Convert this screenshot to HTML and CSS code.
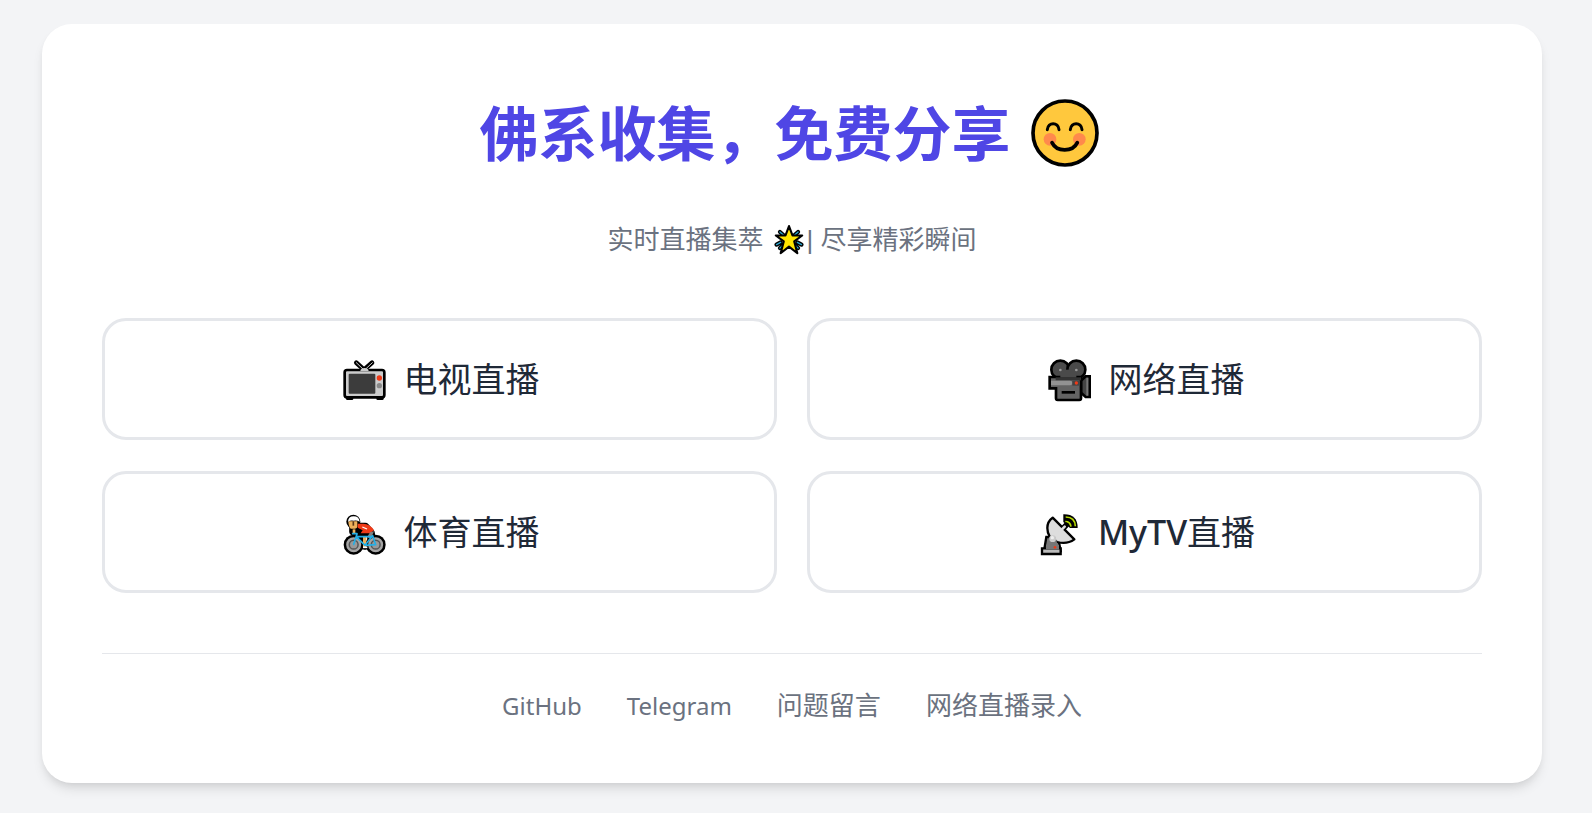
FILE: index.html
```html
<!DOCTYPE html>
<html lang="zh-CN">
<head>
  <meta charset="UTF-8" />
  <meta name="viewport" content="width=device-width, initial-scale=1.0"/>
  <title>佛系收集，免费分享</title>
  <link rel="stylesheet" href="styles.css">
</head>
<body>

  <main class="card">
    <h1 class="title">
      <span>佛系收集，免费分享</span>
      <svg class="title-icon" viewBox="28 27 204 204" aria-hidden="true">
        <circle cx="130" cy="129" r="96" fill="#ffc83d" stroke="#000" stroke-width="11"/>
        <circle cx="85" cy="148" r="19" fill="#ff8a4c"/>
        <circle cx="173" cy="148" r="19" fill="#ff8a4c"/>
        <path d="M77 119c2-24 33-24 35 0M146 119c2-24 33-24 35 0" fill="none" stroke="#000" stroke-width="9" stroke-linecap="round"/>
        <path d="M91 158c14 29 62 29 76 0" fill="none" stroke="#000" stroke-width="11" stroke-linecap="round"/>
      </svg>
    </h1>

    <p class="subtitle">
      <span>实时直播集萃</span>
      <svg class="subtitle-icon" viewBox="24 27 92 92" aria-hidden="true">
        <path d="M44 50l52 46M96 50L44 96M34 86l12-6M94 80l12 6" stroke="#000" stroke-width="12" stroke-linecap="round"/>
        <path d="M44 50l52 46M96 50L44 96M34 86l12-6M94 80l12 6" stroke="#29a6d0" stroke-width="4" stroke-linecap="round"/>
        <path d="M70 33l10 27h28L85 77l9 34-24-19-24 19 9-34-23-17h28z" fill="#ffe500" stroke="#000" stroke-width="6" stroke-linejoin="round"/>
      </svg>
      <span>| 尽享精彩瞬间</span>
    </p>

    <!-- 直播入口 -->
    <nav class="links">
      <a class="link" href="#tv">
        <svg class="link-icon" viewBox="28 16 144 144" aria-hidden="true">
          <path d="M77 39l23 21 24-21" fill="none" stroke="#000" stroke-width="14" stroke-linecap="round"/>
          <path d="M50 139h14v8H50zM141 139h14v8h-14z" fill="#000" stroke="#000" stroke-width="8" stroke-linejoin="round"/>
          <rect x="42" y="61" width="119" height="82" rx="7" fill="#ccc" stroke="#000" stroke-width="8"/>
          <path d="M77 39l24 23 24-23" fill="none" stroke="#ccc" stroke-width="3" stroke-linecap="round"/>
          <path d="M89 64c0-12 25-12 25 0z" fill="#ccc"/>
          <rect x="54" y="72" width="80" height="60" rx="3" fill="#3c3c3c"/>
          <circle cx="146" cy="85" r="8" fill="#f03a17"/>
          <circle cx="146" cy="108" r="8" fill="#888"/>
        </svg>
        <span>电视直播</span>
      </a>
      <a class="link" href="#network">
        <svg class="link-icon" viewBox="28 16 144 144" aria-hidden="true">
          <path d="M136 93l14-13h12v62h-12l-14-13z" fill="#444" stroke="#000" stroke-width="8"/>
          <circle cx="74" cy="60" r="27" fill="#4a4a4a" stroke="#000" stroke-width="8"/>
          <circle cx="122" cy="60" r="27" fill="#4a4a4a" stroke="#000" stroke-width="8"/>
          <path d="M42 82h94v64q0 5-5 5H66q-5 0-5-5v-30H42z" fill="#636363" stroke="#000" stroke-width="8"/>
          <path d="M74 60h48v24H74z" fill="#4a4a4a"/>
          <path d="M60 83h76v9H60z" fill="#333"/>
          <path d="M46 93h57q7 0 7 7t-7 7H46z" fill="#929292"/>
          <path d="M110 93h23v15h-23z" fill="#444"/>
          <path d="M152 84h6v54h-6z" fill="#777"/>
          <circle cx="74" cy="61" r="4" fill="#999"/>
          <circle cx="122" cy="61" r="4" fill="#999"/>
          <circle cx="122" cy="100" r="5" fill="#f03a17"/>
          <path d="M78 124h40v8H78z" fill="#000"/>
        </svg>
        <span>网络直播</span>
      </a>
      <a class="link" href="#sports">
        <svg class="link-icon" viewBox="28 9 144 144" aria-hidden="true">
          <path d="M68 56v24M78 66h26l16 18 4 28M104 84l-28 4 26 34" fill="none" stroke="#000" stroke-width="25" stroke-linejoin="round" stroke-linecap="round"/>
          <circle cx="68" cy="50" r="21"/>
          <!-- 车轮 -->
          <circle cx="69" cy="119" r="30"/>
          <circle cx="135" cy="119" r="30"/>
          <circle cx="69" cy="119" r="19" fill="#555" stroke="#a5a5a5" stroke-width="7"/>
          <circle cx="135" cy="119" r="19" fill="#555" stroke="#a5a5a5" stroke-width="7"/>
          <circle cx="69" cy="119" r="11" fill="#999"/>
          <circle cx="135" cy="119" r="11" fill="#999"/>
          <path d="M53 49h27v15q0 7-7 7H60q-6-5-7-22z" fill="#eeb15b"/>
          <path d="M52 50q1-16 17-16t18 16q-9-5-18-3-9-2-17 3z" fill="#fff"/>
          <path d="M68 49v13" stroke="#5c3818" stroke-width="5"/>
          <path d="M81 56h17q20 0 32 20l-12 9H90l6-9-15-8z" fill="#f03a17"/>
          <path d="M95 66l14 6" stroke="#fff" stroke-width="4"/>
          <path d="M118 82l12-3-10 23-10-6z" fill="#808080"/>
          <path d="M70 73v12" stroke="#eeb15b" stroke-width="8"/>
          <path d="M102 94v32" stroke="#eeb15b" stroke-width="10"/>
          <path d="M66 86h13M79 87l-10 31M77 95l26 26 22-28M79 95h45M126 92l9 27-31 2" fill="none" stroke="#24aee5" stroke-width="5" stroke-linejoin="round" stroke-linecap="round"/>
          <path d="M97 127h13" stroke="#fff" stroke-width="5"/>
        </svg>
        <span>体育直播</span>
      </a>
      <a class="link" href="#mytv">
        <svg class="link-icon" viewBox="24 9 144 144" aria-hidden="true">
          <path d="M112 28q43-1 43 41h-23l-20-18z" fill="#000"/>
          <path d="M119 36q28 0 29 28M118 50q15 0 17 15" fill="none" stroke="#b6d900" stroke-width="5"/>
          <path d="M105 77l15-16" stroke="#000" stroke-width="17" stroke-linecap="round"/>
          <path d="M61 96l-7 42h50l-8-42z" fill="#777" stroke="#000" stroke-width="7"/>
          <path d="M80 38l65 65q-22 16-51 8-30-10-30-42 0-20 16-31z" fill="#ddd" stroke="#000" stroke-width="7" stroke-linejoin="round"/>
          <path d="M102 79l14-14" stroke="#ddd" stroke-width="8" stroke-linecap="round"/>
          <path d="M69 97h20l9 37H61z" fill="#777"/>
          <circle cx="80" cy="101" r="10" fill="#ccc"/>
          <circle cx="79" cy="98" r="5" fill="#eee"/>
          <path d="M48 130h56v17H48z" fill="#bbb" stroke="#000" stroke-width="7"/>
          <path d="M60 119h39v14H60z" fill="#777"/>
          <circle cx="87" cy="127" r="4" fill="#f03a17"/>
        </svg>
        <span><span class="latin">MyTV</span>直播</span>
      </a>
    </nav>

    <footer class="footer">
      <a class="latin-link" href="#github">GitHub</a>
      <a class="latin-link" href="#telegram">Telegram</a>
      <a href="#message">问题留言</a>
      <a href="#submit">网络直播录入</a>
    </footer>
  </main>

</body>
</html>
```

FILE: styles.css
```css
* {
  box-sizing: border-box;
}

body {
  margin: 0;
  min-height: 100vh;
  padding: 24px 34px 30px 26px;
  background-color: #f3f4f6;
  color: #1f2937;
  font-family: 'Noto Sans', 'Noto Sans CJK SC', sans-serif;
}

a {
  color: inherit;
  text-decoration: none;
}

.card {
  max-width: 1500px;
  margin: 0 auto;
  padding: 60px;
  background: #fff;
  border-radius: 30px;
  box-shadow: 0 8px 12px -2px rgba(0,0,0,0.1), 0 4px 8px -4px rgba(0,0,0,0.1);
}

.title {
  display: flex;
  justify-content: center;
  align-items: center;
  gap: 20px;
  margin: 0 0 41px;
  padding-right: 6px;
  color: #4f46e5;
  font-size: 59px;
  font-weight: 700;
  line-height: 98px;
}

.title-icon {
  width: 68px;
  height: 68px;
}

.subtitle {
  display: flex;
  justify-content: center;
  align-items: center;
  margin: 0 0 61px;
  color: #6b7280;
  font-family: 'Liberation Sans', 'Noto Sans CJK SC', sans-serif;
  font-size: 26px;
  line-height: 34px;
}

.subtitle-icon {
  width: 32px;
  height: 32px;
  margin: 0 2px 0 9px;
}

/* Live links */
.links {
  display: grid;
  grid-template-columns: 1fr 1fr;
  gap: 31px 30px;
}

.link {
  display: flex;
  justify-content: center;
  align-items: center;
  gap: 16px;
  padding: 34px 30px;
  border: 3px solid #e5e7eb;
  border-radius: 24px;
  font-size: 34px;
  line-height: 48px;
}

.link:hover {
  border-color: #4f46e5;
}

.link-icon {
  width: 48px;
  height: 48px;
}

.latin {
  font-weight: 500;
}

/* Footer */
.footer {
  display: flex;
  flex-wrap: wrap;
  justify-content: center;
  align-items: center;
  gap: 16px 45px;
  margin-top: 60px;
  padding-top: 34px;
  border-top: 1px solid #e5e7eb;
  color: #6b7280;
  font-size: 26px;
  line-height: 35px;
}

.footer .latin-link {
  font-size: 24px;
}

.footer a:hover {
  color: #4f46e5;
}
```
